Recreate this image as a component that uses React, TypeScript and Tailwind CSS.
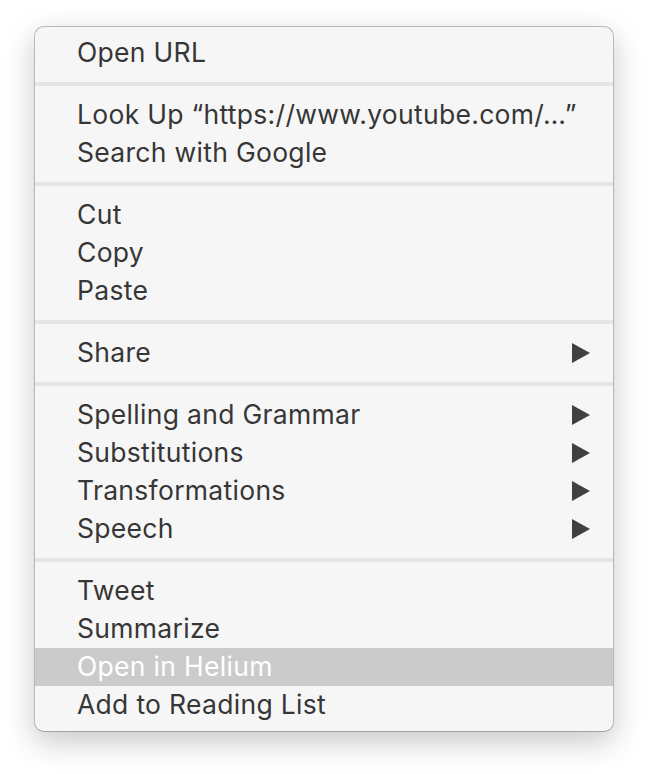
import React from "react";

type Item = { label: string; sub?: boolean; hl?: boolean };
const groups: Item[][] = [
  [{ label: "Open URL" }],
  [{ label: "Look Up \u201Chttps://www.youtube.com/\u2026\u201D" }, { label: "Search with Google" }],
  [{ label: "Cut" }, { label: "Copy" }, { label: "Paste" }],
  [{ label: "Share", sub: true }],
  [
    { label: "Spelling and Grammar", sub: true },
    { label: "Substitutions", sub: true },
    { label: "Transformations", sub: true },
    { label: "Speech", sub: true },
  ],
  [{ label: "Tweet" }, { label: "Summarize" }, { label: "Open in Helium", hl: true }, { label: "Add to Reading List" }],
];

function Arrow() {
  return (
    <svg width="18" height="20" viewBox="0 0 18 20" className="block">
      <path d="M0 0 L18 10 L0 20 Z" fill="#404040" />
    </svg>
  );
}

export default function App() {
  return (
    <div className="min-h-[774px] w-[648px] bg-white pt-[26px] pl-[34px]">
      <div
        className="w-[580px] rounded-[10px] border border-[#b8b8b8] border-b-[#a4a4a4] bg-[#f6f6f6] py-[7px] shadow-[0_10px_30px_rgba(0,0,0,0.22)]"
        style={{ fontFamily: "Inter, 'Noto Sans', sans-serif" }}
      >
        {groups.map((g, gi) => (
          <div key={gi}>
            {gi > 0 && (
              <div className="py-[10px]">
                <div className="h-[4px] bg-[#e5e5e5]" />
              </div>
            )}
            {g.map((it) => (
              <div
                key={it.label}
                className={`flex h-[38px] items-center justify-between pl-[42px] pr-[23px] text-[26.5px] tracking-[0.3px] ${
                  it.hl ? "bg-[#cbcbcb] text-white" : "text-[#363636]"
                }`}
              >
                <span>{it.label}</span>
                {it.sub && <Arrow />}
              </div>
            ))}
          </div>
        ))}
      </div>
    </div>
  );
}
